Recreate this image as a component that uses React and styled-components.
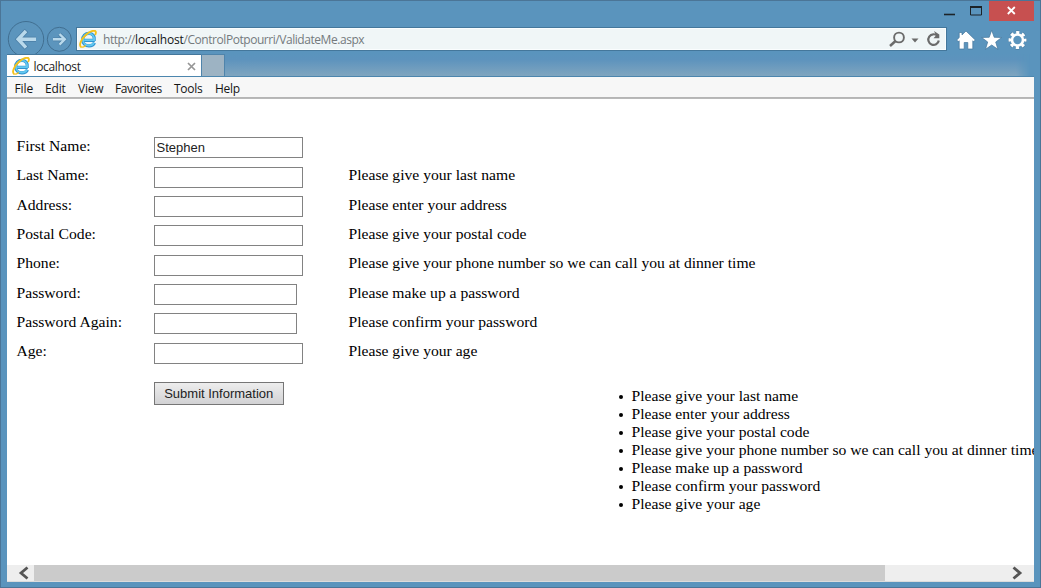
import React from "react";
import styled, { createGlobalStyle } from "styled-components";

const GlobalStyle = createGlobalStyle`
  * { box-sizing: border-box; }
  body { margin: 0; overflow: hidden; background: #5a94bd; }
`;

const uiFont = `"Open Sans", "Noto Sans", sans-serif`;

const Window = styled.div`
  width: 1041px;
  height: 588px;
  display: flex;
  flex-direction: column;
  padding: 0 6px 5px 6px;
  background: #5a94bd;
  border: 1px solid #4b7597;
  overflow: hidden;
  font-family: ${uiFont};
`;

const TitleBar = styled.div`
  height: 20px;
  flex: none;
  display: flex;
  justify-content: flex-end;
`;

const WindowControls = styled.svg`
  display: block;
  width: 94px;
  height: 20px;
`;

const NavRow = styled.div`
  height: 33px;
  flex: none;
  display: flex;
  align-items: flex-start;
`;

const NavButtons = styled.svg`
  display: block;
  flex: none;
  width: 69px;
  height: 37px;
`;

const AddressBar = styled.div`
  width: 871px;
  height: 24px;
  margin-top: 6px;
  display: flex;
  align-items: center;
  padding: 0 4px 0 2px;
  background: #f0f6f7;
  border: 1px solid #44779b;
  box-shadow: inset 0 0 0 1px #fafdfe;
`;

const Url = styled.div`
  flex: 1;
  margin-left: 6px;
  padding-top: 2px;
  font-size: 12px;
  line-height: 20px;
  letter-spacing: -0.45px;
  color: #747a7d;
  b { font-weight: 400; color: #151515; letter-spacing: -0.2px; }
`;

const AddressTools = styled.svg`
  display: block;
  width: 54px;
  height: 20px;
`;

const CommandIcons = styled.svg`
  display: block;
  width: 80px;
  height: 24px;
  margin-top: 7px;
`;

const TabRow = styled.div`
  position: relative;
  z-index: 1;
  height: 23px;
  flex: none;
  display: flex;
  border-bottom: 1px solid #4c86ae;
`;

const TabShade = styled.div`
  flex: 1;
  margin-right: 4px;
  background: linear-gradient(#5a94bd 0%, #5d93bd 25%, #7fa5bf 100%);
  mask-image: linear-gradient(to left, transparent, #000 14px);
`;

const Tab = styled.div`
  width: 194px;
  display: flex;
  align-items: center;
  padding: 1px 5px 0 5px;
  background: #fff;
  border-top: 1px solid #44779b;
`;

const TabTitle = styled.div`
  flex: 1;
  margin-left: 3.5px;
  padding-top: 2px;
  font-size: 12px;
  line-height: 20px;
  letter-spacing: -0.35px;
  color: #222;
`;

const NewTab = styled.div`
  width: 24px;
  background: #9db3c3;
  border: solid #4f84ab;
  border-width: 1px 1px 0 1px;
`;

const MenuBar = styled.div`
  height: 21px;
  flex: none;
  display: flex;
  align-items: center;
  gap: 12px;
  padding: 3px 0 0 7.5px;
  background: #f7f7f7;
  border-bottom: 1px solid #b5b5b5;
`;

const MenuItem = styled.div`
  width: ${(p) => p.$w}px;
  white-space: nowrap;
  font-size: 12px;
  line-height: 18px;
  letter-spacing: ${(p) => p.$spacing}px;
  color: #151515;
`;

const Page = styled.main`
  flex: 1;
  min-height: 0;
  display: flex;
  flex-direction: column;
  overflow: hidden;
  padding: 35px 0 0 9.5px;
  background: #fff;
  border-top: 1px solid #b9b9b9;
  color: #000;
  font: 15.63px/18px "Liberation Serif", serif;
`;

const FieldRow = styled.div`
  height: 29.34px;
  flex: none;
  display: grid;
  grid-template-columns: 137px 195px 1fr;
  align-items: start;
`;

const FieldText = styled.div`
  margin-top: 3.1px;
  white-space: nowrap;
`;

const Field = styled.input`
  width: ${(p) => (p.$narrow ? 143 : 149)}px;
  height: 21px;
  margin: 3.45px 0 0;
  padding: 0 2px;
  border: 1px solid #828282;
  border-radius: 0;
  background: #fff;
  color: #222;
  outline: none;
  font: 13px "Liberation Sans", sans-serif;
`;

const Submit = styled.button`
  flex: none;
  align-self: flex-start;
  width: 130.5px;
  height: 23px;
  margin: 13px 0 0 137px;
  padding: 0;
  border: 1px solid #767676;
  border-radius: 0;
  background: linear-gradient(#ededed, #d2d2d4);
  color: #222;
  font: 13px "Liberation Sans", sans-serif;
  white-space: nowrap;
`;

const Summary = styled.ul`
  flex: none;
  list-style: none;
  margin: -18px 0 0 601px;
  padding: 0;
`;

const SummaryItem = styled.li`
  display: flex;
  height: 18px;
  white-space: nowrap;
`;

const Bullet = styled.span`
  flex: none;
  width: 4px;
  height: 4px;
  margin: 8px 9px 0 1px;
  border-radius: 50%;
  background: #000;
`;

const ScrollBar = styled.div`
  height: 17px;
  flex: none;
  display: flex;
  align-items: stretch;
  background: #eee;
  border-bottom: 1px solid #dcdcdc;
`;

const ScrollArrow = styled.svg`
  display: block;
  flex: none;
  width: 27px;
  height: 16px;
  path { fill: none; stroke: #555; stroke-width: 2.8; }
`;

const Thumb = styled.div`
  width: 851px;
  background: #cbcbcb;
`;

const Gap = styled.div`
  flex: 1;
`;

const Logo = styled.svg`
  display: block;
  flex: none;
  width: 18px;
  height: 18px;
`;

function IeLogo() {
  return (
    <Logo viewBox="0 0 18 18">
      <path d="M15.8 10.3H5.200M15.200 10.800C16 6.200 13.500 3.300 10 3.300C6.300 3.300 3.700 6 3.700 9.700C3.700 13.400 6.300 15.900 10 15.900C12.500 15.900 14.500 14.800 15.500 12.700" fill="none" stroke="#2f93cf" strokeWidth="3.200" />
      <path d="M15.800 10.100H5.200M15 10.400C15.700 6.300 13.300 3.600 10 3.600C6.500 3.600 4 6.200 4 9.700C4 13.200 6.500 15.500 10 15.500C12.300 15.500 14 14.500 15 12.800" fill="none" stroke="#62c8f0" strokeWidth="1.900" />
      <path d="M2.300 17.100C-.6 15.400 2 9.300 7 4.800C10.800 1.400 15.300-.2 16.500 1.300C17.200 2.200 16.800 3.700 16.100 5" fill="none" stroke="#f5c21b" strokeWidth="1.900" />
      <path d="M2.200 17C3.400 17.500 5.200 16.600 6.800 15.400" fill="none" stroke="#f5c21b" strokeWidth="1.200" />
    </Logo>
  );
}

const menus = [
  ["File", 18.5, -0.1],
  ["Edit", 21, -0.15],
  ["View", 25, -0.2],
  ["Favorites", 47, -0.45],
  ["Tools", 29, -0.25],
  ["Help", 26, -0.25],
];

const fields = [
  { label: "First Name:", value: "Stephen" },
  { label: "Last Name:", message: "Please give your last name" },
  { label: "Address:", message: "Please enter your address" },
  { label: "Postal Code:", message: "Please give your postal code" },
  { label: "Phone:", message: "Please give your phone number so we can call you at dinner time" },
  { label: "Password:", message: "Please make up a password", secret: true },
  { label: "Password Again:", message: "Please confirm your password", secret: true },
  { label: "Age:", message: "Please give your age" },
];

export default function App() {
  return (
    <Window>
      <GlobalStyle />
      <TitleBar>
        <WindowControls viewBox="0 0 94 20">
          <path d="M4 13.500h11" stroke="#1c2328" strokeWidth="1.600" />
          <path d="M30.500 5.500h11v8.500h-11z" fill="none" stroke="#1c2328" />
          <path d="M30 6h12" stroke="#1c2328" strokeWidth="2" />
          <path d="M49 0h45v20H49z" fill="#c75050" />
          <path d="M67.800 6l7 7M74.800 6l-7 7" stroke="#fff" strokeWidth="1.800" />
        </WindowControls>
      </TitleBar>
      <NavRow>
        <NavButtons viewBox="0 0 69 37">
          <circle cx="19" cy="18.200" r="17.700" fill="#5c95bd" stroke="#416f91" />
          <path d="M29 18.300H12M19.500 9.500L11.200 18.300L19.500 27.100" fill="none" stroke="#4a7ea5" strokeWidth="5" />
          <path d="M29 18.300H12M19 10L11.200 18.300L19 26.600" fill="none" stroke="#b9d9eb" strokeWidth="3.500" />
          <circle cx="52.300" cy="18.300" r="12" fill="#5c95bd" stroke="#416f91" />
          <path d="M46 18.300H57M52.500 13L57.800 18.300L52.500 23.600" fill="none" stroke="#4a7ea5" strokeWidth="3.800" />
          <path d="M46 18.300H57M52.500 13L57.800 18.300L52.500 23.600" fill="none" stroke="#b9d9eb" strokeWidth="2.400" />
        </NavButtons>
        <AddressBar>
          <IeLogo />
          <Url>http://<b>localhost</b>/ControlPotpourri/ValidateMe.aspx</Url>
          <AddressTools viewBox="0 0 54 20">
            <circle cx="11" cy="8.500" r="4.900" fill="none" stroke="#6b6b6b" strokeWidth="1.900" />
            <path d="M7.500 12L2 17" stroke="#6b6b6b" strokeWidth="2.500" />
            <path d="M23.500 9.500h7l-3.500 4z" fill="#6b6b6b" />
            <path d="M49.500 7A5.300 5.300 0 1 0 50.800 11.500" fill="none" stroke="#6b6b6b" strokeWidth="2.200" />
            <path d="M46 2L51.300 5.500V9.200H45.500L48 6.500z" fill="#6b6b6b" />
          </AddressTools>
        </AddressBar>
        <CommandIcons viewBox="0 0 80 24">
          <g fill="#fff" stroke="#44769c" strokeWidth=".7">
            <path d="M19 3L28.300 12L26.700 13.600L25.800 12.800V21H20.800V14.500H17.200V21H12.200V12.800L11.300 13.600L9.700 12L12.200 9.600V4.500H15V6.900z" />
            <path d="M44.700 2.300L47.200 9.300L54.700 9.500L48.700 14L50.900 21.300L44.700 17L38.500 21.300L40.700 14L34.700 9.500L42.200 9.300z" />
          </g>
          <circle cx="70.500" cy="12" r="7.500" fill="none" stroke="#44769c" strokeWidth="4" strokeDasharray="3.500 2.390" strokeDashoffset="1.750" />
          <circle cx="70.500" cy="12" r="7.500" fill="none" stroke="#fff" strokeWidth="3" strokeDasharray="3.200 2.690" strokeDashoffset="1.600" />
          <circle cx="70.500" cy="12" r="5.500" fill="none" stroke="#fff" strokeWidth="2.600" />
        </CommandIcons>
      </NavRow>
      <TabRow>
        <Tab>
          <IeLogo />
          <TabTitle>localhost</TabTitle>
          <svg width="9" height="9" viewBox="0 0 9 9">
            <path d="M1 1l7 7M8 1l-7 7" stroke="#969696" strokeWidth="1.700" />
          </svg>
        </Tab>
        <NewTab />
        <TabShade />
      </TabRow>
      <MenuBar>
        {menus.map(([name, w, spacing]) => (
          <MenuItem key={name} $w={w} $spacing={spacing}>{name}</MenuItem>
        ))}
      </MenuBar>
      <Page>
        {fields.map((f) => (
          <FieldRow key={f.label}>
            <FieldText>{f.label}</FieldText>
            <Field $narrow={f.secret} type={f.secret ? "password" : "text"} defaultValue={f.value} />
            <FieldText>{f.message}</FieldText>
          </FieldRow>
        ))}
        <Submit>Submit Information</Submit>
        <Summary>
          {fields.filter((f) => f.message).map((f) => (
            <SummaryItem key={f.label}>
              <Bullet />
              {f.message}
            </SummaryItem>
          ))}
        </Summary>
      </Page>
      <ScrollBar>
        <ScrollArrow viewBox="0 0 27 16">
          <path d="M20.500 2.500L14 8L20.500 13.500" />
        </ScrollArrow>
        <Thumb />
        <Gap />
        <ScrollArrow viewBox="0 0 27 16">
          <path d="M6.500 2.500L13 8L6.500 13.500" />
        </ScrollArrow>
      </ScrollBar>
    </Window>
  );
}
